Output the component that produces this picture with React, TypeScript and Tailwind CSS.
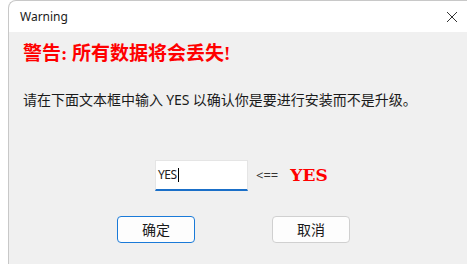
export default function App() {
    return (
        <div className="h-[264px] w-[467px] overflow-hidden bg-white font-['Noto_Sans','Noto_Sans_CJK_SC',sans-serif]">
            <div className="ml-[8px] flex h-full flex-col rounded-tl-[8px] border-l border-t border-[#c8c8c8] bg-white">
                <div className="flex h-[31px] items-center justify-between pl-[11px] pr-[8px]">
                    <span className="text-[12px] text-[#1a1a1a]">Warning</span>
                    <svg width="12" height="12" viewBox="0 0 12 12" className="mr-[1px]">
                        <path d="M1 1 L11 11 M11 1 L1 11" stroke="#333" strokeWidth="1" />
                    </svg>
                </div>
                <div className="flex flex-1 flex-col bg-[#f0f0f0] pl-[14px]">
                    <div className="mt-[10px] font-['Liberation_Serif','Noto_Sans_CJK_SC',serif] text-[19px] font-bold leading-[23px] text-[#ff0000]">
                        警告: 所有数据将会丢失!
                    </div>
                    <div className="mt-[24px] font-['Noto_Sans_CJK_SC',sans-serif] text-[14px] leading-[20px] text-[#1a1a1a]">
                        请在下面文本框中输入 <span className="font-['Noto_Sans',sans-serif]">YES</span> 以确认你是要进行安装而不是升级。
                    </div>
                    <div className="mt-[50px] flex items-center pl-[132px]">
                        <div className="flex h-[31px] w-[93px] items-center border border-b-2 border-[#e5e5e5] border-b-[#1a6fc8] bg-white pl-[2px]">
                            <span className="text-[12px] tracking-[-0.5px] text-[#222]">YES</span>
                            <span className="ml-[1px] h-[14px] w-px bg-black" />
                        </div>
                        <span className="ml-[8px] text-[13px] text-[#333]">&lt;==</span>
                        <span className="ml-[12px] font-['DejaVu_Serif',serif] text-[17px] font-bold text-[#ff0000]">
                            YES
                        </span>
                    </div>
                    <div className="mt-[25px] flex pl-[94px] font-['Noto_Sans_CJK_SC',sans-serif]">
                        <button
                            type="button"
                            className="flex h-[27px] w-[78px] items-center justify-center rounded-[4px] border border-[#1a7ad8] bg-[#fdfdfd] text-[14px] text-[#1a1a1a]"
                        >
                            确定
                        </button>
                        <button
                            type="button"
                            className="ml-[77px] flex h-[27px] w-[78px] items-center justify-center rounded-[4px] border border-[#d0d0d0] bg-[#fdfdfd] text-[14px] text-[#1a1a1a]"
                        >
                            取消
                        </button>
                    </div>
                </div>
            </div>
        </div>
    );
}
